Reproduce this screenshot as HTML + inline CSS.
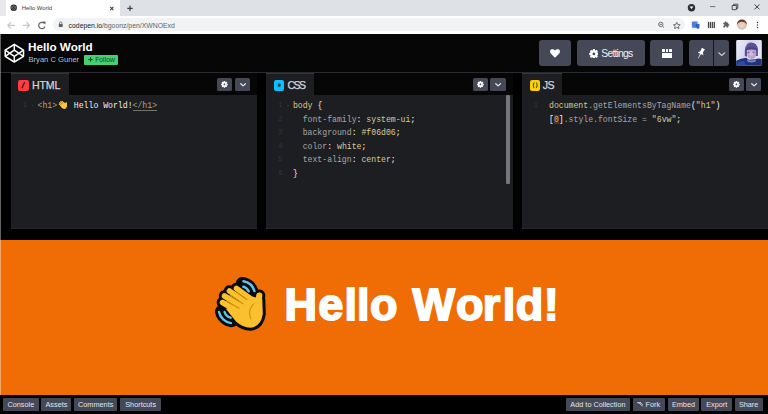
<!DOCTYPE html>
<html><head><meta charset="utf-8">
<style>
*{margin:0;padding:0;box-sizing:border-box}
html,body{width:768px;height:414px;overflow:hidden;background:#000;font-family:"Liberation Sans",sans-serif;position:relative}
.a{position:absolute}
/* chrome */
#tabstrip{left:0;top:0;width:768px;height:16px;background:#dee1e6}
#tab{left:5.5px;top:0;width:114.3px;height:16px;background:#fff;border-radius:0}
#toolbar{left:0;top:16px;width:768px;height:17.5px;background:#fff}
#omni{left:53px;top:18.2px;width:631.5px;height:13.2px;background:#f1f3f4;border-radius:6.6px}
.ctext{font-size:7.4px;color:#3c4043;white-space:nowrap}
/* codepen header */
#cphead{left:0;top:33.5px;width:768px;height:38.5px;background:#060606}
.btn{background:#444857;border-radius:3px}
#editors{left:0;top:72px;width:768px;height:157px;background:#000;border-top:1.4px solid #2a2b30}
.panel{top:73.4px;height:156.1px;background:#1d1e22;box-shadow:inset 0 -1px 0 #26272c}
.tabbar{left:0;top:0;width:100%;height:21.8px;background:#060606}
.etab{left:0;top:0;height:21.8px;background:#1d1e22;border-top:1.2px solid #35373e}
.ename{font-size:10.6px;color:#d2d4dc;font-weight:normal;letter-spacing:-.15px;-webkit-text-stroke:.25px #d2d4dc}
.ebtn{top:4.5px;width:15.6px;height:12.8px;background:#444857;border-radius:1.5px}
.code{font-family:"Liberation Mono",monospace;font-size:8.17px;white-space:pre;line-height:13.45px}
.ln{color:#34353b;font-family:"Liberation Mono",monospace;font-size:7px}
.tb{color:#a49c7c}.tg{color:#bba370}.tx{color:#f0f0f0}
.se{color:#ddca7e}.br{color:#e8e8f0}.pr{color:#a7a7a7}.pu{color:#f5f5f5}.va{color:#d8cd98}.nu{color:#d8a27a;background:#4d3220}
.bigl{top:282px;font-size:45px;line-height:1;font-weight:bold;color:#fff;-webkit-text-stroke:1.8px #fff}
#preview{left:0;top:239.5px;width:768px;height:155.5px;background:#f06d06}
#footer{left:0;top:395px;width:768px;height:19px;background:#000}
.fbtn{top:2.5px;height:13.4px;background:#444857;border-radius:1px;color:#e4e5ea;font-size:7.3px;line-height:13.4px;text-align:center;white-space:nowrap}
</style></head><body>
<div id="tabstrip" class="a"></div>
<div class="a" style="left:0;top:0;width:5.5px;height:16px;background:#e7e9ec"></div><div id="tab" class="a"></div>
<div id="toolbar" class="a"></div>
<div id="omni" class="a"></div>
<div class="a ctext" style="left:21.8px;top:4.9px;font-size:5.9px;color:#3c4043">Hello World</div>
<svg class="a" style="left:0;top:0" width="768" height="34" viewBox="0 0 768 34">
<circle cx="13.7" cy="7.8" r="3.2" fill="#222"/><path d="M13.7 5.6 L15.8 7 L15.8 8.6 L13.7 10 L11.6 8.6 L11.6 7 Z M11.6 7 L13.7 8.4 L15.8 7 M13.7 5.6 V7.2" fill="none" stroke="#9a9a9a" stroke-width=".55"/>
<path d="M110.2 6.9 L113.4 10.1 M113.4 6.9 L110.2 10.1" stroke="#3c4043" stroke-width="1.1"/>
<path d="M130 5.6 L130 11 M127.3 8.3 L132.7 8.3" stroke="#3c4043" stroke-width="1.2"/>
<circle cx="691.5" cy="7.7" r="3.7" fill="#2f3033"/><path d="M689.6 6.6 L693.4 6.6 L691.5 8.9 Z" fill="#fff"/>
<path d="M710 6.6 L715.3 6.6" stroke="#5f6368" stroke-width="0.9"/>
<path d="M732.2 5.5 h4.2 v4.2 h-4.2 Z M733.6 5.5 v-1.3 h4.2 v4.2 h-1.4" fill="none" stroke="#3c4043" stroke-width="0.9"/>
<path d="M754.6 4.5 L759.4 9.3 M759.4 4.5 L754.6 9.3" stroke="#3c4043" stroke-width="1"/>
<path d="M14.8 25.3 L8 25.3 M11 22.2 L7.9 25.3 L11 28.4" fill="none" stroke="#c4c7c5" stroke-width="1.2"/>
<path d="M22.7 25.3 L29.5 25.3 M26.5 22.2 L29.6 25.3 L26.5 28.4" fill="none" stroke="#c4c7c5" stroke-width="1.2"/>
<path d="M44.3 23.4 A3.2 3.2 0 1 0 44.9 26.5" fill="none" stroke="#5f6368" stroke-width="1.2"/><path d="M42.4 21.4 L45.5 21.4 L45.5 24.4 Z" fill="#5f6368"/>
<rect x="58.8" y="24" width="3.9" height="3" rx=".4" fill="#5f6368"/><path d="M59.6 24.2 V23.1 A1.15 1.15 0 0 1 61.9 23.1 V24.2" fill="none" stroke="#5f6368" stroke-width=".8"/>
<circle cx="660.8" cy="24.4" r="2.2" fill="none" stroke="#5f6368" stroke-width=".9"/><path d="M659.7 24.4 h2.2 M662.4 26 L664 27.6" stroke="#5f6368" stroke-width=".9"/>
<path d="M676.8 22.3 L677.8 24.6 L680.2 24.8 L678.4 26.3 L679 28.6 L676.8 27.4 L674.6 28.6 L675.2 26.3 L673.4 24.8 L675.8 24.6 Z" fill="none" stroke="#5f6368" stroke-width=".9" stroke-linejoin="round"/>
<circle cx="695.6" cy="24.9" r="5.4" fill="#f4f6fb"/><rect x="691.9" y="21.4" width="5.6" height="6.4" rx=".8" fill="#4e7fdc"/><path d="M695.6 24 L699.4 24 L699.4 28.3 L697.2 29 L697.2 27.8 L695.6 27.8 Z" fill="#3563c4"/>
<rect x="707.9" y="21.9" width="1.2" height="6.2" fill="#3c4043"/><rect x="709.8" y="21.9" width="1.2" height="6.2" fill="#3c4043"/><rect x="711.7" y="21.9" width="1.2" height="6.2" fill="#3c4043"/><rect x="713.6" y="21.9" width="1.3" height="6.2" fill="#3c4043"/>
<g transform="translate(722.6 21) scale(0.3)"><path d="M20.5 11H19V7c0-1.1-.9-2-2-2h-4V3.5C13 2.12 11.88 1 10.5 1S8 2.12 8 3.5V5H4c-1.1 0-1.99.9-1.99 2v3.8H3.5c1.49 0 2.7 1.21 2.7 2.7s-1.21 2.7-2.7 2.7H2V20c0 1.1.9 2 2 2h3.8v-1.5c0-1.490 1.21-2.7 2.7-2.7 1.49 0 2.7 1.21 2.7 2.7V22H17c1.1 0 2-.9 2-2v-4h1.5c1.38 0 2.5-1.12 2.5-2.5S21.88 11 20.5 11z" fill="#5f6368"/></g>
<circle cx="741.9" cy="24.6" r="5.1" fill="#d7c2b2"/><path d="M736.9 24.6 A5 5 0 0 1 746.9 24.6 Q745 21.5 741.9 21.8 Q738.5 21.6 736.9 24.6Z" fill="#6b3b2a"/><circle cx="741.9" cy="25.2" r="2.6" fill="#e8d0c0"/>
<circle cx="757.5" cy="22.6" r=".75" fill="#3c4043"/><circle cx="757.5" cy="25" r=".75" fill="#3c4043"/><circle cx="757.5" cy="27.4" r=".75" fill="#3c4043"/>
</svg>
<div class="a ctext" style="left:68.6px;top:22.1px;font-size:6.85px"><span style="color:#202124">codepen.io</span><span style="color:#5f6368">/bgoonz/pen/XWNOExd</span></div>

<div id="cphead" class="a"></div>
<svg class="a" style="left:0;top:34px" width="30" height="38" viewBox="0 34 30 38"><g fill="none" stroke="#fff" stroke-width="1.5" stroke-linejoin="round"><path d="M14.3 44.3 L23.5 50.2 L23.5 56.3 L14.3 62 L5.2 56.3 L5.2 50.2 Z"/><path d="M5.2 50.2 L14.3 56.3 L23.5 50.2 M5.2 56.3 L14.3 50.2 L23.5 56.3 M14.3 44.3 L14.3 50.2 M14.3 56.3 L14.3 62"/></g></svg>

<div class="a" style="left:28px;top:40.4px;font-size:11.7px;font-weight:bold;color:#fff;white-space:nowrap">Hello World</div>
<div class="a" style="left:28.5px;top:54.6px;font-size:7.6px;color:#bdbec6;white-space:nowrap">Bryan C Guner</div>
<div class="a" style="left:84px;top:55.2px;width:34px;height:9.6px;background:#47cf73;border-radius:1px;font-size:6.8px;line-height:9.6px;color:#0b4a1f;white-space:nowrap;padding-left:11.2px">Follow<svg style="position:absolute;left:4.4px;top:2.3px" width="5" height="5" viewBox="0 0 10 10"><path d="M5 .5 V9.5 M.5 5 H9.5" stroke="#0b4a1f" stroke-width="2.2"/></svg></div>

<div class="a btn" style="left:538.7px;top:40.2px;width:32.5px;height:26.3px"></div>
<div class="a btn" style="left:577px;top:40.2px;width:67.7px;height:26.3px"></div>
<div class="a" style="left:601.3px;top:48px;font-size:10.4px;letter-spacing:-.8px;color:#f0f0f4;white-space:nowrap">Settings</div>
<div class="a btn" style="left:650.2px;top:40.2px;width:32.6px;height:26.3px"></div>
<div class="a btn" style="left:688.7px;top:40.2px;width:40.6px;height:26.3px"></div>
<svg class="a" style="left:550px;top:49px" width="10" height="9" viewBox="0 0 20 18"><path d="M10 17.5 L2 9.5 C-0.5 7 -0.5 3 2 1.2 C4.5 -0.6 8 0.3 10 3 C12 0.3 15.5 -0.6 18 1.2 C20.5 3 20.5 7 18 9.5 Z" fill="#fff"/></svg>
<svg class="a" style="left:588.6px;top:48.6px" width="9.8" height="9.8" viewBox="0 0 20 20"><path d="M19.81 8.05 L19.81 11.95 L17.49 12.18 L16.84 13.76 L18.31 15.56 L15.56 18.31 L13.76 16.84 L12.18 17.49 L11.95 19.81 L8.05 19.81 L7.82 17.49 L6.24 16.84 L4.44 18.31 L1.69 15.56 L3.16 13.76 L2.51 12.18 L0.19 11.95 L0.19 8.05 L2.51 7.82 L3.16 6.24 L1.69 4.44 L4.44 1.69 L6.24 3.16 L7.82 2.51 L8.05 0.19 L11.95 0.19 L12.18 2.51 L13.76 3.16 L15.56 1.69 L18.31 4.44 L16.84 6.24 L17.49 7.82Z M10 7.2 A2.8 2.8 0 1 0 10 12.8 A2.8 2.8 0 1 0 10 7.2Z" fill="#fff" fill-rule="evenodd"/></svg>
<div class="a" style="left:662px;top:49px;width:3px;height:3px;background:#fff;border-radius:.5px"></div><div class="a" style="left:665.6px;top:49px;width:2.8px;height:3px;background:#fff;border-radius:.5px"></div><div class="a" style="left:669px;top:49px;width:3px;height:3px;background:#fff;border-radius:.5px"></div><div class="a" style="left:662px;top:53px;width:10px;height:5px;background:#fff"></div>
<svg class="a" style="left:694.8px;top:47.2px" width="12" height="13" viewBox="0 0 24 26"><g transform="rotate(28 12 12)"><path d="M8 2 L16 2 L15 4 L15 10 L18 13 L18 14 L13 14 L12.5 24 L11.5 24 L11 14 L6 14 L6 13 L9 10 L9 4 Z" fill="#fff"/></g></svg>
<div class="a" style="left:713px;top:40.2px;width:1.1px;height:26.3px;background:#15161b"></div>
<svg class="a" style="left:718px;top:51.5px" width="7.5" height="4.5" viewBox="0 0 15 9"><path d="M1.5 1.5 L7.5 7 L13.5 1.5" fill="none" stroke="#c9cad3" stroke-width="2.2" stroke-linecap="round" stroke-linejoin="round"/></svg>
<svg class="a" style="left:736px;top:40.2px" width="26" height="25.8" viewBox="0 0 26 26"><defs><clipPath id="av"><rect width="26" height="26" rx="1.5"/></clipPath><linearGradient id="avbg" x1="0" y1="0" x2="1" y2="0.3"><stop offset="0" stop-color="#eef0fb"/><stop offset="0.5" stop-color="#d3d3f0"/><stop offset="1" stop-color="#e4e6f7"/></linearGradient><radialGradient id="avf" cx="0.45" cy="0.5" r="0.6"><stop offset="0" stop-color="#dcc6e0"/><stop offset="1" stop-color="#a98cc0"/></radialGradient></defs><g clip-path="url(#av)"><rect width="26" height="26" fill="url(#avbg)"/><path d="M8.8 16 Q8 4 14 2.6 Q21.5 2.2 22 10 L22 16 L20 16 L20 10 L11 10 L11 17 Z" fill="#5c5196"/><ellipse cx="15.8" cy="13.6" rx="4.6" ry="5.2" fill="url(#avf)"/><path d="M11.5 12.5 h2 M16.5 12.3 h2" stroke="#5a4a7a" stroke-width=".8"/><path d="M10 8.5 Q15 5.5 21.5 8.5 L21.5 10.5 Q15 8.5 10 10.5Z" fill="#4d4488"/><path d="M0 26 L0 21 Q5 18.5 10 18 L13 20 L19 19.5 Q23 18 26 19.5 L26 26 Z" fill="#22337e"/><path d="M11 19.3 Q15.5 22 20 19.3 L19.5 22 Q15.5 23.5 11.5 22Z" fill="#7b88bd"/><path d="M0 26 L3 22 L8 21 L10 26Z" fill="#2e4aa6"/></g></svg>


<div id="editors" class="a"></div>
<div class="a panel" style="left:11px;width:245.8px">
  <div class="a tabbar"></div>
  <div class="a etab" style="width:57.5px"></div>
  <div class="a" style="left:7.3px;top:6.85px;width:10.5px;height:10.5px;background:#ff3c41;border-radius:2px"><svg style="position:absolute;left:0;top:0" width="10.5" height="10.5" viewBox="0 0 10.5 10.5"><path d="M6.6 2.2 L3.9 8.3" stroke="#3a0a0c" stroke-width="1.1"/></svg></div>
  <div class="a ename" style="left:21px;top:5.6px">HTML</div>
  <div class="a ln" style="left:11.5px;top:28px">1</div><div class="a" style="left:20.5px;top:31.5px;width:1.5px;height:1.5px;background:#3a3b40"></div><div class="a" style="left:122px;top:36.9px;width:24px;height:.8px;background:#76756c"></div>
  <div class="a code" style="left:26.5px;top:26px"><span class="tb">&lt;</span><span class="tg">h1</span><span class="tb">&gt;</span><span style="display:inline-block;width:11.8px;height:8px;position:relative;vertical-align:top"><svg style="position:absolute;left:1px;top:1px" width="9.4" height="9.4" viewBox="217 282 48 48"><line x1="236.5" y1="288.5" x2="251" y2="299" stroke="#1a1204" stroke-width="11.6" stroke-linecap="round"/><line x1="229.5" y1="291" x2="247" y2="303" stroke="#1a1204" stroke-width="11.6" stroke-linecap="round"/><line x1="224.5" y1="296" x2="243" y2="307.5" stroke="#1a1204" stroke-width="11.6" stroke-linecap="round"/><line x1="222.5" y1="302.5" x2="239" y2="312" stroke="#1a1204" stroke-width="11.6" stroke-linecap="round"/><line x1="259.3" y1="295.5" x2="257.5" y2="310" stroke="#1a1204" stroke-width="12.1" stroke-linecap="round"/><path d="M250 296 L262.3 299 L262.8 314 Q261 326.5 250.5 327.8 Q242.5 327.5 236 321.5 L226 309 Z" fill="#1a1204" stroke="#1a1204" stroke-width="6" stroke-linejoin="round"/><line x1="236.5" y1="288.5" x2="251" y2="299" stroke="#f7c83e" stroke-width="5.6" stroke-linecap="round"/><line x1="229.5" y1="291" x2="247" y2="303" stroke="#f7c83e" stroke-width="5.6" stroke-linecap="round"/><line x1="224.5" y1="296" x2="243" y2="307.5" stroke="#f7c83e" stroke-width="5.6" stroke-linecap="round"/><line x1="222.5" y1="302.5" x2="239" y2="312" stroke="#f7c83e" stroke-width="5.6" stroke-linecap="round"/><line x1="259.3" y1="295.5" x2="257.5" y2="310" stroke="#f7c83e" stroke-width="6.1" stroke-linecap="round"/><path d="M250 296 L262.3 299 L262.8 314 Q261 326.5 250.5 327.8 Q242.5 327.5 236 321.5 L226 309 Z" fill="#f7c83e"/></svg></span> <span class="tx">Hello World!</span><span class="tb">&lt;/</span><span class="tg">h1</span><span class="tb">&gt;</span></div>
  <div class="a ebtn" style="left:205.6px"><svg style="position:absolute;left:4.6px;top:2.9px" width="6.8" height="6.8" viewBox="0 0 20 20"><path d="M19.81 8.05 L19.81 11.95 L17.49 12.18 L16.84 13.76 L18.31 15.56 L15.56 18.31 L13.76 16.84 L12.18 17.49 L11.95 19.81 L8.05 19.81 L7.82 17.49 L6.24 16.84 L4.44 18.31 L1.69 15.56 L3.16 13.76 L2.51 12.18 L0.19 11.95 L0.19 8.05 L2.51 7.82 L3.16 6.24 L1.69 4.44 L4.44 1.69 L6.24 3.16 L7.82 2.51 L8.05 0.19 L11.95 0.19 L12.18 2.51 L13.76 3.16 L15.56 1.69 L18.31 4.44 L16.84 6.24 L17.49 7.82Z M10 7.4 A2.6 2.6 0 1 0 10 12.6 A2.6 2.6 0 1 0 10 7.4Z" fill="#fff" fill-rule="evenodd"/></svg></div>
  <div class="a ebtn" style="left:223.7px"><svg style="position:absolute;left:4.9px;top:5.2px" width="6.2" height="3.7" viewBox="0 0 15 9"><path d="M1.8 1.8 L7.5 7 L13.2 1.8" fill="none" stroke="#e6e7ec" stroke-width="3" stroke-linecap="round" stroke-linejoin="round"/></svg></div>
</div>
<div class="a panel" style="left:266.4px;width:246.5px">
  <div class="a tabbar"></div>
  <div class="a etab" style="width:47.7px"></div>
  <div class="a" style="left:7.5px;top:6.85px;width:10.5px;height:10.5px;background:#0ebeff;border-radius:2px"><svg style="position:absolute;left:0;top:0" width="10.5" height="10.5" viewBox="0 0 10.5 10.5"><path d="M5.25 3.3 V7.2 M3.6 4.2 L6.9 6.3 M6.9 4.2 L3.6 6.3" stroke="#08304a" stroke-width=".9"/></svg></div>
  <div class="a ename" style="left:21px;top:5.6px;letter-spacing:-1.5px">CSS</div>
  <div class="a ln" style="left:11.8px;top:28.00px">1</div><div class="a ln" style="left:11.8px;top:41.45px">2</div><div class="a ln" style="left:11.8px;top:54.90px">3</div><div class="a ln" style="left:11.8px;top:68.35px">4</div><div class="a ln" style="left:11.8px;top:81.80px">5</div><div class="a ln" style="left:11.8px;top:95.25px">6</div>
  <div class="a" style="left:21px;top:31.5px;width:1.5px;height:1.5px;background:#3a3b40"></div>
  <div class="a" style="left:240px;top:22px;width:3.6px;height:89px;background:#75767c;border-radius:1px"></div>
  <div class="a code" style="left:26.5px;top:26px"><span class="se">body</span> <span class="br">{</span>
  <span class="pr">font-family</span><span class="pu">:</span> <span class="va">system-ui</span><span class="pu">;</span>
  <span class="pr">background</span><span class="pu">:</span> <span class="va">#f06d06</span><span class="pu">;</span>
  <span class="pr">color</span><span class="pu">:</span> <span class="va">white</span><span class="pu">;</span>
  <span class="pr">text-align</span><span class="pu">:</span> <span class="va">center</span><span class="pu">;</span>
<span class="br">}</span></div>
  <div class="a ebtn" style="left:206.5px"><svg style="position:absolute;left:4.6px;top:2.9px" width="6.8" height="6.8" viewBox="0 0 20 20"><path d="M19.81 8.05 L19.81 11.95 L17.49 12.18 L16.84 13.76 L18.31 15.56 L15.56 18.31 L13.76 16.84 L12.18 17.49 L11.95 19.81 L8.05 19.81 L7.82 17.49 L6.24 16.84 L4.44 18.31 L1.69 15.56 L3.16 13.76 L2.51 12.18 L0.19 11.95 L0.19 8.05 L2.51 7.82 L3.16 6.24 L1.69 4.44 L4.44 1.69 L6.24 3.16 L7.82 2.51 L8.05 0.19 L11.95 0.19 L12.18 2.51 L13.76 3.16 L15.56 1.69 L18.31 4.44 L16.84 6.24 L17.49 7.82Z M10 7.4 A2.6 2.6 0 1 0 10 12.6 A2.6 2.6 0 1 0 10 7.4Z" fill="#fff" fill-rule="evenodd"/></svg></div>
  <div class="a ebtn" style="left:223.8px"><svg style="position:absolute;left:4.9px;top:5.2px" width="6.2" height="3.7" viewBox="0 0 15 9"><path d="M1.8 1.8 L7.5 7 L13.2 1.8" fill="none" stroke="#e6e7ec" stroke-width="3" stroke-linecap="round" stroke-linejoin="round"/></svg></div>
</div>
<div class="a panel" style="left:521.8px;width:246.2px">
  <div class="a tabbar"></div>
  <div class="a etab" style="width:40.2px"></div>
  <div class="a" style="left:8.2px;top:6.85px;width:10.5px;height:10.5px;background:#fcd000;border-radius:2px"><svg style="position:absolute;left:0;top:0" width="10.5" height="10.5" viewBox="0 0 10.5 10.5"><path d="M4 2.6 Q2.6 5.25 4 7.9 M6.5 2.6 Q7.9 5.25 6.5 7.9" fill="none" stroke="#4a3a00" stroke-width="1"/></svg></div>
  <div class="a ename" style="left:21px;top:5.6px;letter-spacing:-.6px">JS</div>
  <div class="a ln" style="left:12px;top:28px">1</div>
  <div class="a code" style="left:27.2px;top:26px"><span class="se">document</span><span class="pr">.getElementsByTagName</span><span class="pu">(</span><span class="va">"h1"</span><span class="pu">)</span>
<span class="pu">[</span><span class="nu">0</span><span class="pu">]</span><span class="pr">.style.fontSize</span> <span class="pr">=</span> <span class="va">"6vw"</span><span class="pu">;</span></div>
  <div class="a ebtn" style="left:206.9px"><svg style="position:absolute;left:4.6px;top:2.9px" width="6.8" height="6.8" viewBox="0 0 20 20"><path d="M19.81 8.05 L19.81 11.95 L17.49 12.18 L16.84 13.76 L18.31 15.56 L15.56 18.31 L13.76 16.84 L12.18 17.49 L11.95 19.81 L8.05 19.81 L7.82 17.49 L6.24 16.84 L4.44 18.31 L1.69 15.56 L3.16 13.76 L2.51 12.18 L0.19 11.95 L0.19 8.05 L2.51 7.82 L3.16 6.24 L1.69 4.44 L4.44 1.69 L6.24 3.16 L7.82 2.51 L8.05 0.19 L11.95 0.19 L12.18 2.51 L13.76 3.16 L15.56 1.69 L18.31 4.44 L16.84 6.24 L17.49 7.82Z M10 7.4 A2.6 2.6 0 1 0 10 12.6 A2.6 2.6 0 1 0 10 7.4Z" fill="#fff" fill-rule="evenodd"/></svg></div>
  <div class="a ebtn" style="left:224.1px"><svg style="position:absolute;left:4.9px;top:5.2px" width="6.2" height="3.7" viewBox="0 0 15 9"><path d="M1.8 1.8 L7.5 7 L13.2 1.8" fill="none" stroke="#e6e7ec" stroke-width="3" stroke-linecap="round" stroke-linejoin="round"/></svg></div>
</div>

<div id="preview" class="a"></div>
<svg class="a" style="left:212px;top:274px" width="56" height="58" viewBox="212 274 56 58"><path d="M242.21 283.46A11.6 11.6 0 0 1 252.26 292.19" stroke="#0a0a0a" stroke-width="13" fill="none" stroke-linecap="round"/><path d="M231.77 320.74A11.8 11.8 0 0 1 221.46 311.45" stroke="#0a0a0a" stroke-width="13" fill="none" stroke-linecap="round"/><line x1="236.5" y1="288.5" x2="251" y2="299" stroke="#0a0a0a" stroke-width="11.6" stroke-linecap="round"/><line x1="229.5" y1="291" x2="247" y2="303" stroke="#0a0a0a" stroke-width="11.6" stroke-linecap="round"/><line x1="224.5" y1="296" x2="243" y2="307.5" stroke="#0a0a0a" stroke-width="11.6" stroke-linecap="round"/><line x1="222.5" y1="302.5" x2="239" y2="312" stroke="#0a0a0a" stroke-width="11.6" stroke-linecap="round"/><line x1="259.3" y1="295.5" x2="257.5" y2="310" stroke="#0a0a0a" stroke-width="12.1" stroke-linecap="round"/><path d="M250 296 L262.3 299 L262.8 314 Q261 326.5 250.5 327.8 Q242.5 327.5 236 321.5 L226 309 Z" fill="#0a0a0a" stroke="#0a0a0a" stroke-width="6" stroke-linejoin="round"/><line x1="236.5" y1="288.5" x2="251" y2="299" stroke="#fbc02d" stroke-width="5.6" stroke-linecap="round"/><line x1="229.5" y1="291" x2="247" y2="303" stroke="#fbc02d" stroke-width="5.6" stroke-linecap="round"/><line x1="224.5" y1="296" x2="243" y2="307.5" stroke="#fbc02d" stroke-width="5.6" stroke-linecap="round"/><line x1="222.5" y1="302.5" x2="239" y2="312" stroke="#fbc02d" stroke-width="5.6" stroke-linecap="round"/><line x1="259.3" y1="295.5" x2="257.5" y2="310" stroke="#fbc02d" stroke-width="6.1" stroke-linecap="round"/><path d="M250 296 L262.3 299 L262.8 314 Q261 326.5 250.5 327.8 Q242.5 327.5 236 321.5 L226 309 Z" fill="#fbc02d"/><path d="M253.6 304 Q249 309 249.6 314 Q250 317 251 319" stroke="#d4950e" stroke-width="1.2" fill="none" stroke-linecap="round"/><line x1="236.0" y1="291.8" x2="247.0" y2="299.5" stroke="#cf8e0c" stroke-width="1.3" stroke-linecap="round"/><line x1="230.0" y1="295.5" x2="243.0" y2="303.8" stroke="#cf8e0c" stroke-width="1.3" stroke-linecap="round"/><line x1="226.5" y1="301.2" x2="239.0" y2="308.2" stroke="#cf8e0c" stroke-width="1.3" stroke-linecap="round"/><path d="M243.43 281.21A14 14 0 0 1 254.46 291.14" stroke="#62c3ec" stroke-width="2.4" fill="none" stroke-linecap="round"/><path d="M243.23 286.69A8.6 8.6 0 0 1 248.79 291.37" stroke="#62c3ec" stroke-width="2.4" fill="none" stroke-linecap="round"/><path d="M231.01 323.16A14.3 14.3 0 0 1 219.01 311.97" stroke="#62c3ec" stroke-width="2.4" fill="none" stroke-linecap="round"/><path d="M230.67 317.69A9 9 0 0 1 224.54 312.08" stroke="#62c3ec" stroke-width="2.4" fill="none" stroke-linecap="round"/></svg>
<div class="a bigl" style="left:284.45px">H</div><div class="a bigl" style="left:318.30px">e</div><div class="a bigl" style="left:344.60px">l</div><div class="a bigl" style="left:356.90px">l</div><div class="a bigl" style="left:369.90px">o</div><div class="a bigl" style="left:412.60px">W</div><div class="a bigl" style="left:456.10px">o</div><div class="a bigl" style="left:482.70px">r</div><div class="a bigl" style="left:502.85px">l</div><div class="a bigl" style="left:515.70px">d</div><div class="a bigl" style="left:543.85px">!</div>

<div id="footer" class="a">
  <div class="a fbtn" style="left:3px;width:35.7px">Console</div>
  <div class="a fbtn" style="left:41.4px;width:30.1px">Assets</div>
  <div class="a fbtn" style="left:74.1px;width:43.2px">Comments</div>
  <div class="a fbtn" style="left:120.2px;width:40.9px">Shortcuts</div>
  <div class="a fbtn" style="left:566px;width:63.9px">Add to Collection</div>
  <div class="a fbtn" style="left:632.6px;width:32.5px;text-align:left;padding-left:13px">Fork<svg style="position:absolute;left:4.5px;top:4.3px" width="6.5" height="5" viewBox="0 0 13 10"><path d="M1 1.5 L7 1.5 M4 1.5 L11 8.5 M7 1.5 L11 5" fill="none" stroke="#f0f0f4" stroke-width="1.6" stroke-linecap="round"/></svg></div>
  <div class="a fbtn" style="left:668.3px;width:30.4px">Embed</div>
  <div class="a fbtn" style="left:701.4px;width:30.6px">Export</div>
  <div class="a fbtn" style="left:734.7px;width:27.9px">Share</div>
</div>
<div class="a" style="left:0;top:34px;width:1.1px;height:361px;background:rgba(255,255,255,.38)"></div>
</body></html>
